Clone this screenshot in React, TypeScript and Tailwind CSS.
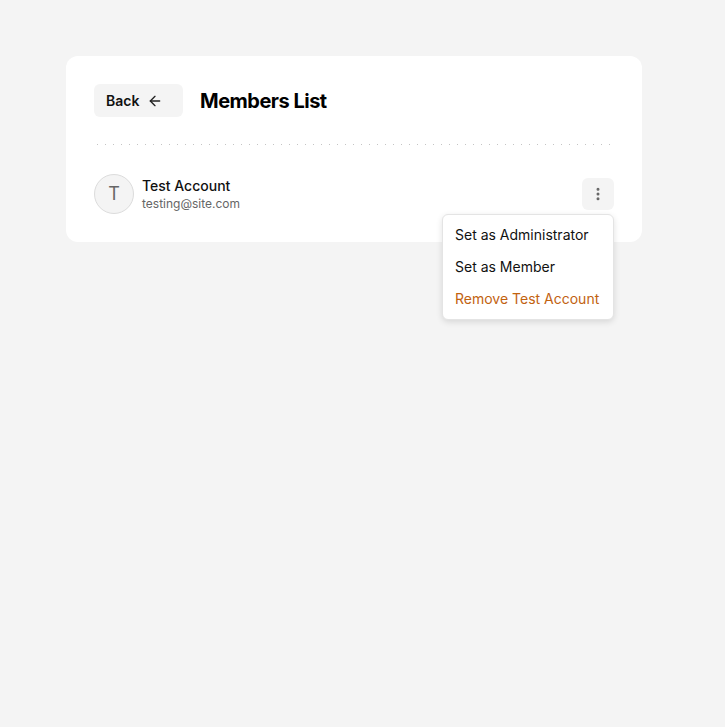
import { ArrowLeft, EllipsisVertical } from "lucide-react";

export default function App() {
  return (
    <div className="min-h-[727px] w-full bg-[#f4f4f4] pt-14 font-['Inter',sans-serif]">
      <div className="ml-[66px] w-[576px] rounded-xl bg-white px-7 pt-7 pb-7">
        <div className="flex items-center gap-[17px]">
          <button className="flex h-[33px] w-[89px] items-center gap-2 rounded-md bg-[#f4f4f4] pl-3 text-sm font-semibold text-[#111]">
            Back
            <ArrowLeft size={16} strokeWidth={2} className="text-[#222]" />
          </button>
          <h1 className="text-xl font-bold tracking-[-0.5px] text-black">Members List</h1>
        </div>

        <div className="mt-[27px] ml-[3px] h-px w-[516px] bg-[linear-gradient(to_right,#c4c4c4_1px,transparent_1px)] bg-[length:8px_1px]" />

        <div className="mt-[29px] flex items-center">
          <div className="flex h-10 w-10 items-center justify-center rounded-full border border-[#dcdcdc] bg-[#f4f4f4] text-lg text-[#666]">
            T
          </div>
          <div className="ml-2 flex flex-col">
            <span className="text-sm font-medium leading-5 text-[#111]">Test Account</span>
            <span className="text-xs leading-4 text-[#666]">testing@site.com</span>
          </div>
          <div className="relative ml-auto">
            <button className="flex h-8 w-8 items-center justify-center rounded-md bg-[#f4f4f4] text-[#666]">
              <EllipsisVertical size={16} strokeWidth={2.5} />
            </button>
            <div className="absolute right-0 top-9 w-[172px] rounded-md border border-[#e4e4e4] bg-white py-1 shadow-[0_2px_6px_rgba(0,0,0,0.12)]">
              <div className="flex h-8 items-center px-3 text-sm text-[#111]">Set as Administrator</div>
              <div className="flex h-8 items-center px-3 text-sm text-[#111]">Set as Member</div>
              <div className="flex h-8 items-center px-3 text-sm text-[#c2620f]">Remove Test Account</div>
            </div>
          </div>
        </div>
      </div>
    </div>
  );
}
